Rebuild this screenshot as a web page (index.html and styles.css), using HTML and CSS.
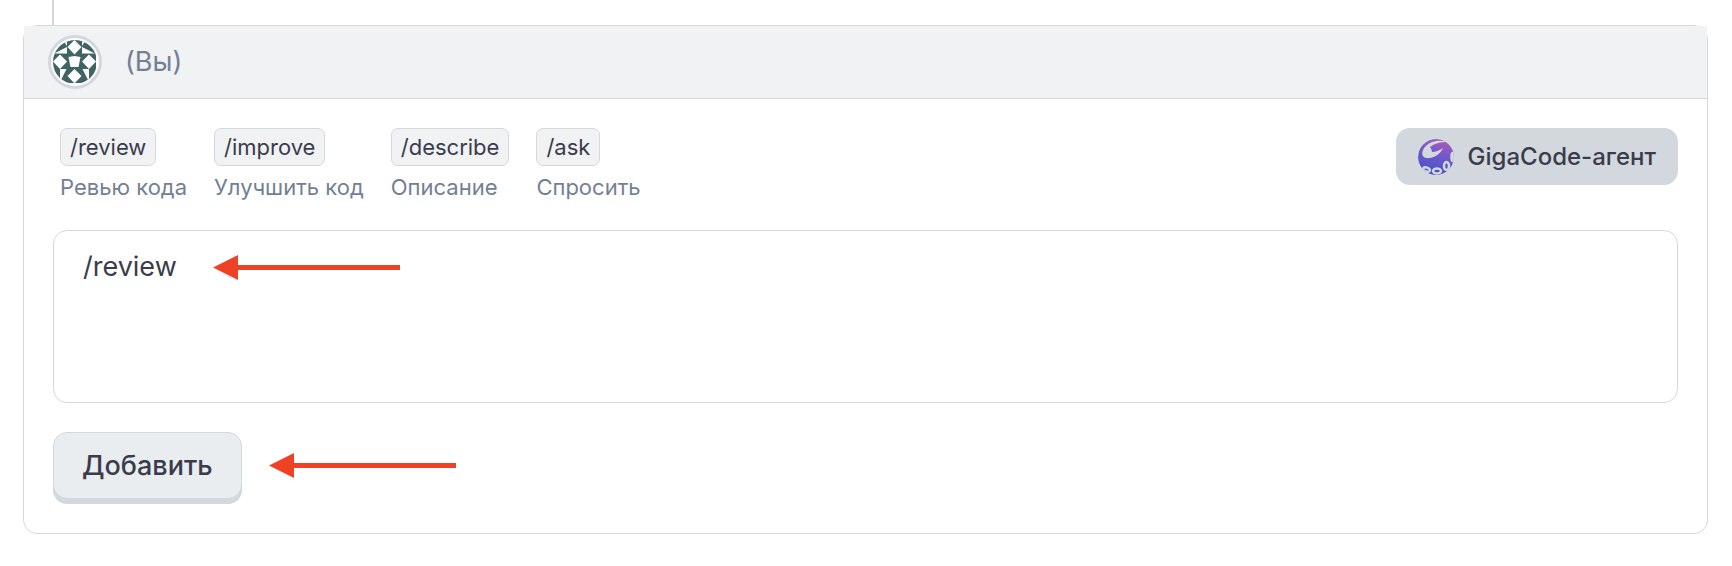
FILE: index.html
```html
<!DOCTYPE html>
<html lang="ru">
<head>
    <meta charset="UTF-8">
    <meta name="viewport" content="width=device-width, initial-scale=1.0">
    <title>Комментарий</title>
    <link rel="stylesheet" href="styles.css">
</head>
<body>
    <div class="thread-line"></div>
    <section class="comment">
        <header class="comment-header">
            <svg class="avatar" viewBox="0 0 54 54" aria-hidden="true">
                <defs>
                    <clipPath id="avatar-clip"><circle cx="27" cy="27" r="22"/></clipPath>
                </defs>
                <circle cx="27" cy="27" r="25.500" fill="#fff" stroke="#d3d8df" stroke-width="3"/>
                <g clip-path="url(#avatar-clip)">
                    <rect x="5" y="5" width="43" height="43" fill="#406464"/>
                    <g fill="#fff">
                        <path d="M26.500 5l7 7-7 7.500-7-7.500z"/>
                        <path d="M12 19.500l7 7-7 7.500-7-7.500z"/>
                        <path d="M41 19.500l7 7-7 7.500-7-7.500z"/>
                        <path d="M26.500 34l7 7-7 7.500-7-7.500z"/>
                        <path d="M20.500 22l6-1 6 1-2 10h-8z"/>
                        <path d="M19 12v6.500H6zM34 12v6.500h13zM12 34h6.500L12 47zM41 34h-6.500L41 47z"/>
                        <path d="M15 5h4v6zM38 5h-4v6z"/>
                    </g>
                </g>
            </svg>
            <span class="author">(Вы)</span>
        </header>
        <form class="comment-body">
            <div class="toolbar">
                <ul class="commands">
                    <li><button type="button" class="command" aria-describedby="d-review">/review</button><span id="d-review">Ревью кода</span></li>
                    <li><button type="button" class="command" aria-describedby="d-improve">/improve</button><span id="d-improve">Улучшить код</span></li>
                    <li><button type="button" class="command" aria-describedby="d-describe">/describe</button><span id="d-describe">Описание</span></li>
                    <li><button type="button" class="command" aria-describedby="d-ask">/ask</button><span id="d-ask">Спросить</span></li>
                </ul>
                <button type="button" class="agent">
                    <svg class="agent-logo" viewBox="0 0 36 36" aria-hidden="true">
                        <defs>
                            <linearGradient id="agent-fill" x1="0.7" y1="0" x2="0.4" y2="1">
                                <stop offset="0" stop-color="#aa5cb8"/>
                                <stop offset="0.5" stop-color="#6a58cb"/>
                                <stop offset="1" stop-color="#4553c6"/>
                            </linearGradient>
                            <clipPath id="agent-clip"><circle cx="18" cy="18" r="18"/></clipPath>
                        </defs>
                        <g clip-path="url(#agent-clip)">
                            <circle cx="18" cy="18" r="18" fill="url(#agent-fill)"/>
                            <path fill="#d3d8df" d="M30 3C21 0 11 2 6 9c-4 7-1 11 6 10 6-1 11-5 13-10-3 2-7 4-11 4 0-2-1-3-2-5 5-4 11-5 18-5z"/>
                            <g fill="#4f55c8" stroke="#d3d8df" stroke-width="2.5">
                                <ellipse cx="8.500" cy="30.500" rx="3.500" ry="2" transform="rotate(20 8.500 30.500)"/>
                                <ellipse cx="19" cy="32" rx="4" ry="2.500"/>
                                <ellipse cx="28.500" cy="27" rx="2.500" ry="4"/>
                                <ellipse cx="34.500" cy="18" rx="1" ry="4"/>
                            </g>
                        </g>
                    </svg>
                    GigaCode-агент
                </button>
            </div>
            <div class="editor">
                <textarea class="comment-text" aria-label="Комментарий">/review</textarea>
                <svg class="arrow arrow-over" viewBox="0 0 187 25" aria-hidden="true"><path d="M0 12.500L25 0v10h162v5H25v10z"/></svg>
            </div>
            <div class="actions">
                <button type="submit" class="submit">Добавить</button>
                <svg class="arrow" viewBox="0 0 187 25" aria-hidden="true"><path d="M0 12.500L25 0v10h162v5H25v10z"/></svg>
            </div>
        </form>
    </section>
</body>
</html>
```
FILE: styles.css
```css
* {
    box-sizing: border-box;
}
body {
    font-family: Inter, "Liberation Sans", sans-serif;
    background-color: #fff;
    margin: 0;
    padding: 0 24px 32px 23px;
    color: #3a3c4b;
}
button, textarea {
    font-family: inherit;
    color: inherit;
}
.thread-line {
    width: 2px;
    height: 25px;
    margin-left: 29px;
    background: #d3d8df;
}
.comment {
    border: 1px solid #d3d8df;
    border-radius: 14px;
}
.comment-header {
    display: flex;
    align-items: center;
    gap: 23px;
    padding: 9px 24px;
    background: #f1f2f4;
    border-bottom: 1px solid #d3d8df;
}
.avatar {
    width: 54px;
    height: 54px;
}
.author {
    font-size: 27px;
    line-height: 32px;
    color: #738094;
}
.comment-body {
    padding: 29px;
}
.toolbar {
    display: flex;
    justify-content: space-between;
    align-items: flex-start;
}
.commands {
    display: flex;
    gap: 27px;
    margin: 0;
    padding: 0 0 0 7px;
    list-style: none;
    font-size: 22px;
    line-height: 26px;
    color: #738094;
}
.commands li {
    display: flex;
    flex-direction: column;
    align-items: flex-start;
    gap: 8px;
}
.command {
    padding: 5px 9px;
    background: #f1f2f4;
    border: 1px solid #d3d8df;
    border-radius: 7px;
    font-size: 22px;
    line-height: 26px;
    color: #3a3c4b;
}
.agent {
    display: flex;
    align-items: center;
    gap: 14px;
    height: 57px;
    padding: 0 22px;
    background: #d3d8df;
    border: none;
    border-radius: 14px;
    font-size: 24px;
    line-height: 28px;
    font-weight: 500;
}
.agent-logo {
    width: 36px;
    height: 36px;
}
.editor {
    position: relative;
    margin-top: 30px;
}
.comment-text {
    display: block;
    width: 100%;
    height: 173px;
    padding: 18px 29px;
    background: #fff;
    border: 1px solid #d3d8df;
    border-radius: 14px;
    font-size: 27px;
    line-height: 36px;
    resize: none;
}
.actions {
    display: flex;
    align-items: center;
    gap: 27px;
    margin-top: 29px;
    padding-bottom: 5px;
}
.submit {
    height: 67px;
    padding: 0 28px;
    background: #e9edf0;
    border: 1px solid #d3d8df;
    border-radius: 14px;
    box-shadow: 0 5px 0 #d3d8df;
    font-size: 27px;
    line-height: 32px;
    font-weight: 500;
}
.arrow {
    width: 187px;
    height: 25px;
    fill: #ee4126;
}
.arrow-over {
    position: absolute;
    top: 25px;
    left: 160px;
}
```
